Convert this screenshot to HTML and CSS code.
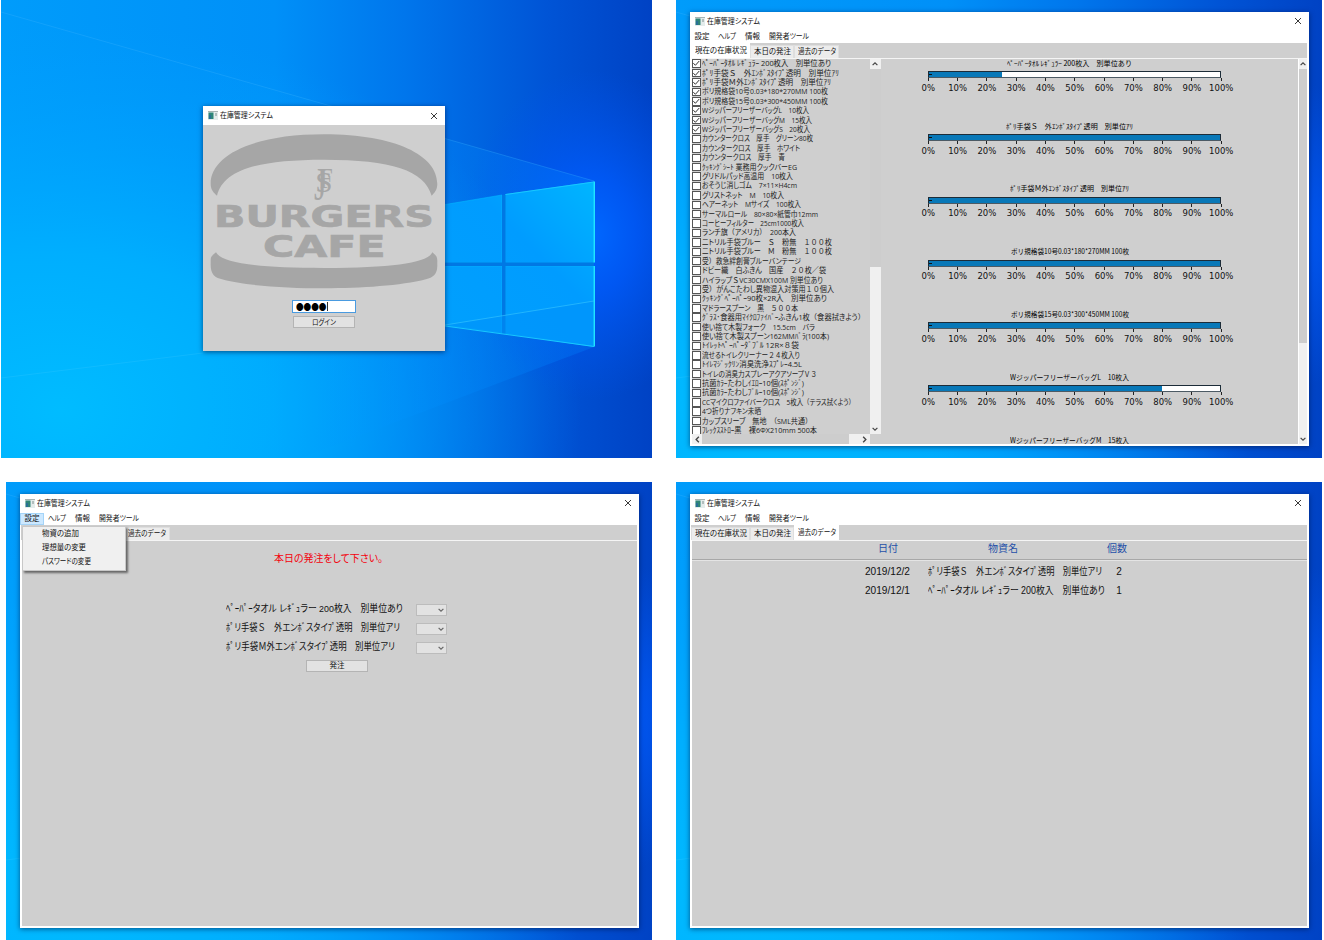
FILE: index.html
```html
<!DOCTYPE html>
<html lang="ja">
<head>
<meta charset="utf-8">
<title>在庫管理システム</title>
<link rel="stylesheet" href="styles.css">
</head>
<body>
<svg class="defs" width="0" height="0" aria-hidden="true">
  <defs>
    <linearGradient id="base" x1="0" y1="0" x2="1" y2="0">
      <stop offset="0" stop-color="#009cfb"/><stop offset=".42" stop-color="#0090f8"/>
      <stop offset=".62" stop-color="#0076ec"/><stop offset=".84" stop-color="#0054d6"/>
      <stop offset="1" stop-color="#0042c4"/>
    </linearGradient>
    <radialGradient id="cyan" gradientUnits="userSpaceOnUse" cx="0" cy="0" r="1" gradientTransform="translate(60 410) scale(520 390)">
      <stop offset="0" stop-color="#00bcff"/><stop offset=".4" stop-color="#00b2ff" stop-opacity=".85"/>
      <stop offset="1" stop-color="#00a0ff" stop-opacity="0"/>
    </radialGradient>
    <radialGradient id="glow" gradientUnits="userSpaceOnUse" cx="0" cy="0" r="1" gradientTransform="translate(590 235) scale(130 165)">
      <stop offset="0" stop-color="#0068ff"/><stop offset=".35" stop-color="#005cff" stop-opacity=".75"/>
      <stop offset="1" stop-color="#0054f0" stop-opacity="0"/>
    </radialGradient>
    <linearGradient id="beam" gradientUnits="userSpaceOnUse" x1="200" y1="0" x2="594" y2="0">
      <stop offset="0" stop-color="#00a8ff" stop-opacity="0"/><stop offset=".55" stop-color="#0092ff" stop-opacity=".5"/>
      <stop offset="1" stop-color="#0080ff" stop-opacity=".7"/>
    </linearGradient>
    <linearGradient id="pane" gradientUnits="userSpaceOnUse" x1="440" y1="340" x2="594" y2="190">
      <stop offset="0" stop-color="#00a0fd"/><stop offset=".6" stop-color="#009cff"/><stop offset="1" stop-color="#00b4ff"/>
    </linearGradient>
    <symbol id="wallpaper" viewBox="0 0 651 458" preserveAspectRatio="none">
      <rect width="651" height="458" fill="url(#base)"/>
      <rect width="651" height="458" fill="url(#cyan)"/>
      <rect width="651" height="458" fill="url(#glow)"/>
      <path d="M0 12 593 181V347L300 458H0Z" fill="url(#beam)" opacity=".45"/>
      <path d="M0 12 593 181" stroke="#3cb4ff" stroke-width="1" opacity=".3"/>
      <path d="M0 378 202 353" stroke="#4cd0ff" stroke-width="1" opacity=".2"/>
      <path d="M400 212 501 195V262.500H400ZM504.500 194.500 593 182V262.500H504.500ZM400 266H501V333L400 319ZM504.500 266H593V346.500L504.500 333.500Z" fill="url(#pane)" stroke="#00b8ff" stroke-width=".6"/>
      <path d="M400 262.500H593V266H400ZM501 195 504.500 194.500V333.500L501 333Z" fill="#0078e4"/>
      <path d="M444 325 593 301V346L444 326Z" fill="#0090fa" opacity=".5"/>
      <path d="M444 325 593 301" stroke="#38c8ff" stroke-width="1" opacity=".6"/>
      <path d="M593.300 181.500V262.500M593.300 266V346.500" stroke="#20e4ff" stroke-width="1.400"/>
      <path d="M504.500 194.500 593 182M444 326 593 346.500" stroke="#18c8ff" stroke-width="1"/>
    </symbol>
    <symbol id="app" viewBox="0 0 10 9">
      <rect width="10" height="9" fill="#e4ecec"/><path d="M0 .5H10" stroke="#aab4b4"/>
      <rect x=".5" y="1.500" width="5" height="6.500" fill="#2f8578"/><rect x="1" y="4" width="2" height="4" fill="#2a6f96"/>
      <path d="M8 2V5" stroke="#647878" stroke-width=".8"/>
    </symbol>
    <symbol id="close" viewBox="0 0 8 8"><path d="M1 1 7 7M7 1 1 7" stroke="#222" stroke-width=".9" fill="none"/></symbol>
    <symbol id="chev" viewBox="0 0 8 8"><path d="M1.600 2.800 4 5.200 6.400 2.800" stroke="currentColor" stroke-width="1.200" fill="none"/></symbol>
  </defs>
</svg>

<main class="screens">
  <section class="desktop first">
    <svg class="wall"><use href="#wallpaper"/></svg>
    <div class="window login">
      <header class="titlebar"><svg class="app"><use href="#app"/></svg><span class="fit" data-w="53">在庫管理システム</span><svg class="close"><use href="#close"/></svg></header>
      <div class="login-body">
        <svg class="logo" viewBox="40 110 700 475">
          <path d="M48 265C48 181 172 117 388 117S728 181 728 265C728 285 719 292 711 301 690 225 590 193 388 193S86 225 67 301C58 292 48 285 48 265Z"/>
          <path d="M64 471C82 502 178 518 388 518S700 502 713 471C722 479 728 482 728 495V512C728 537 714 547 694 552 620 571 500 579 388 579S150 571 82 552C60 546 48 537 48 508V493C48 482 55 479 64 471Z"/>
          <g class="mono"><text x="358" y="314" font-size="142" textLength="38" lengthAdjust="spacingAndGlyphs">J</text><text x="362" y="291" font-size="88" textLength="52" lengthAdjust="spacingAndGlyphs">S</text><text x="376" y="278" font-size="90" textLength="38" lengthAdjust="spacingAndGlyphs">F</text></g>
          <g class="brand"><text x="58" y="396" textLength="660" lengthAdjust="spacingAndGlyphs">BURGERS</text><text x="205" y="486" textLength="368" lengthAdjust="spacingAndGlyphs">CAFE</text></g>
        </svg>
        <div class="password"><span class="fit" data-w="30.5">●●●●</span><i class="caret"></i></div>
        <div class="button"><span class="fit" data-w="24">ログイン</span></div>
      </div>
    </div>
  </section>

  <section class="desktop">
    <svg class="wall"><use href="#wallpaper"/></svg>
    <div class="window main">
      <header class="titlebar"><svg class="app"><use href="#app"/></svg><span class="fit" data-w="53">在庫管理システム</span><svg class="close"><use href="#close"/></svg></header>
      <nav class="menubar"><span class="mi"><span class="fit" data-w="15">設定</span></span><span class="mi"><span class="fit" data-w="18">ヘルプ</span></span><span class="mi"><span class="fit" data-w="15">情報</span></span><span class="mi"><span class="fit" data-w="40">開発者ツール</span></span></nav>
      <div class="tabs"><span class="tab on"><span class="fit" data-w="52">現在の在庫状況</span></span><span class="tab"><span class="fit" data-w="37">本日の発注</span></span><span class="tab"><span class="fit" data-w="38">過去のデータ</span></span></div>
      <div class="page stock">
        <div class="picker">
          <ul class="items" id="items"></ul>
          <div class="vbar"><svg class="up"><use href="#chev"/></svg><i class="thumb"></i><svg class="down"><use href="#chev"/></svg></div>
          <div class="hbar"><svg class="left"><use href="#chev"/></svg><i class="thumb"></i><svg class="right"><use href="#chev"/></svg></div>
        </div>
        <div class="charts" id="charts"></div>
        <div class="vbar outer"><svg class="up"><use href="#chev"/></svg><i class="thumb"></i><svg class="down"><use href="#chev"/></svg></div>
      </div>
    </div>
  </section>

  <section class="desktop third">
    <svg class="wall"><use href="#wallpaper"/></svg>
    <div class="window main">
      <header class="titlebar"><svg class="app"><use href="#app"/></svg><span class="fit" data-w="53">在庫管理システム</span><svg class="close"><use href="#close"/></svg></header>
      <nav class="menubar"><span class="mi open"><span class="fit" data-w="15">設定</span></span><span class="mi"><span class="fit" data-w="18">ヘルプ</span></span><span class="mi"><span class="fit" data-w="15">情報</span></span><span class="mi"><span class="fit" data-w="40">開発者ツール</span></span></nav>
      <div class="tabs"><span class="tab last"><span class="fit" data-w="38">過去のデータ</span></span></div>
      <div class="page order">
        <p class="notice"><span class="fit" data-w="109">本日の発注をして下さい。</span></p>
        <div class="line"><span class="name"><span class="fit" data-w="177">ﾍﾟｰﾊﾟｰタオル レｷﾞｭラー 200枚入　別単位あり</span></span><span class="combo"><svg><use href="#chev"/></svg></span></div>
        <div class="line"><span class="name"><span class="fit" data-w="174">ﾎﾟリ手袋Ｓ　外エンﾎﾞスタイﾌﾟ透明　別単位アリ</span></span><span class="combo"><svg><use href="#chev"/></svg></span></div>
        <div class="line"><span class="name"><span class="fit" data-w="169">ﾎﾟリ手袋Ｍ外エンﾎﾞスタイﾌﾟ透明　別単位アリ</span></span><span class="combo"><svg><use href="#chev"/></svg></span></div>
        <div class="button"><span class="fit" data-w="15">発注</span></div>
      </div>
      <div class="dropdown"><span class="fit" data-w="37">物資の追加</span><span class="fit" data-w="44">理想量の変更</span><span class="fit" data-w="49">パスワードの変更</span></div>
    </div>
  </section>

  <section class="desktop">
    <svg class="wall"><use href="#wallpaper"/></svg>
    <div class="window main">
      <header class="titlebar"><svg class="app"><use href="#app"/></svg><span class="fit" data-w="53">在庫管理システム</span><svg class="close"><use href="#close"/></svg></header>
      <nav class="menubar"><span class="mi"><span class="fit" data-w="15">設定</span></span><span class="mi"><span class="fit" data-w="18">ヘルプ</span></span><span class="mi"><span class="fit" data-w="15">情報</span></span><span class="mi"><span class="fit" data-w="40">開発者ツール</span></span></nav>
      <div class="tabs"><span class="tab"><span class="fit" data-w="52">現在の在庫状況</span></span><span class="tab"><span class="fit" data-w="37">本日の発注</span></span><span class="tab on"><span class="fit" data-w="38">過去のデータ</span></span></div>
      <div class="page history">
        <div class="row head"><span><span class="fit" data-w="20">日付</span></span><span><span class="fit" data-w="30">物資名</span></span><span><span class="fit" data-w="20">個数</span></span></div>
        <div class="row"><span><span class="fit" data-w="45">2019/12/2</span></span><span><span class="fit" data-w="174">ﾎﾟリ手袋Ｓ　外エンﾎﾞスタイﾌﾟ透明　別単位アリ</span></span><span>2</span></div>
        <div class="row"><span><span class="fit" data-w="45">2019/12/1</span></span><span><span class="fit" data-w="177">ﾍﾟｰﾊﾟｰタオル レｷﾞｭラー 200枚入　別単位あり</span></span><span>1</span></div>
      </div>
    </div>
  </section>
</main>
<script src="app.js"></script>
</body>
</html>
```

FILE: styles.css
```css
* { box-sizing: border-box; }
body { margin: 0; width: 1324px; height: 940px; overflow: hidden; background: #fff; color: #111;
  font-family: "Open Sans", "Noto Sans CJK JP", sans-serif; font-size: 7.5px; line-height: 1; }
.defs { position: absolute; }
.screens { display: grid; grid-template-columns: 646px 646px; grid-template-rows: 458px 458px; column-gap: 24px; row-gap: 24px; padding-left: 6px; }
.desktop { position: relative; overflow: hidden; }
.first { margin-left: -5px; }
.wall { display: block; width: 100%; height: 100%; }
.window { position: absolute; display: flex; flex-direction: column; background: #cfcfcf; box-shadow: 0 1px 5px rgba(0,15,60,.6); }
.login { left: 202px; top: 106px; width: 242px; height: 245px; }
.main { left: 14px; top: 12px; width: 619px; height: 434px; background: #fff; padding: 0 2px 2px; }

.fit { display: block; white-space: pre; flex: none; font-feature-settings: "palt"; }
.fit > span { display: inline-block; transform-origin: 0 50%; }
.wide { font-feature-settings: normal; }

.titlebar { height: 18px; flex: none; display: flex; align-items: center; background: #fff; padding: 1px 0 0 3px; gap: 2px; }
.login .titlebar { height: 19px; padding: 0 0 0 5px; }
.app { width: 10px; height: 9px; }
.main .app { margin-top: -1px; }
.close { width: 8px; height: 8px; margin-left: auto; margin-right: 5px; }
.main .close { margin-top: -1px; }
.login .close { margin-right: 7px; }
.menubar { height: 13px; flex: none; display: flex; align-items: center; margin-left: -2px; }
.mi { padding: 1px 4.400px 0; height: 12px; display: flex; align-items: center; }
.mi.open { background: #cce8ff; box-shadow: inset 0 0 0 1px #a4d4f8; }
.tabs { height: 15px; flex: none; display: flex; align-items: flex-end; background: #cfcfcf; margin-left: -1px; }
.tab { height: 13px; display: flex; align-items: center; padding: 0 2.500px; background: #ececec; border: 1px solid #dedede; border-bottom: 0; }
.tab.on { height: 15px; background: #fff; border-color: #fff; }
.tab.last { margin-left: 103.500px; }
.page { flex: 1; min-height: 0; background: #cfcfcf; border-top: 1px solid #f5f5f5; }

.login-body { display: flex; flex-direction: column; align-items: center; }
.logo { width: 233.300px; height: 158.300px; margin-top: 6.700px; margin-left: 1px; fill: #a6a6a6; }
.brand { font-family: "DejaVu Sans", sans-serif; font-weight: 700; font-size: 91px; stroke: #a6a6a6; stroke-width: 2px; }
.mono { font-family: "Liberation Serif", serif; }
.password { margin-top: 10px; width: 64px; height: 13px; background: #fff; border: 1px solid #4a9be0; display: flex; align-items: center; padding-left: 3px; font-family: "Noto Sans CJK JP", sans-serif; font-size: 9px; color: #000; }
.caret { width: 1px; height: 9px; background: #333; }
.button { width: 62px; height: 11.500px; border: 1px solid #b4b4b4; background: #e2e2e2; display: flex; align-items: center; justify-content: center; }
.login .button { margin-top: 3.500px; padding-top: 1px; }

.stock { display: grid; grid-template-columns: 189px 1fr 9px; }
.picker { display: grid; grid-template-columns: 178px 10.500px; grid-template-rows: 375px 10px; min-height: 0; height: 385px; }
.items { list-style: none; margin: 0; padding: 0; overflow: hidden; color: #222; }
.items li { height: 9.420px; display: flex; align-items: center; gap: 1.500px; font-size: 7.600px; }
.items .fit { padding-top: .5px; }
.box { flex: none; width: 8.500px; height: 8.500px; background: #fff; border: 1px solid #555; }
.box svg { display: block; width: 6.500px; height: 6.500px; }
.vbar { background: #f0f0f0; display: flex; flex-direction: column; align-items: center; color: #444; }
.vbar svg { width: 8px; height: 10px; flex: none; }
.up { transform: rotate(180deg); }
.thumb { background: #cdcdcd; }
.vbar .thumb { width: 100%; height: 198px; }
.vbar .down { margin-top: auto; }
.outer { border-left: 1px solid #fff; height: 385px; }
.outer .thumb { height: 274px; }
.hbar { background: #f0f0f0; display: flex; align-items: center; color: #444; padding: 0 1px; }
.hbar svg { width: 9px; height: 9px; flex: none; }
.hbar .thumb { height: 100%; width: 147px; }
.left { transform: rotate(90deg); }
.right { transform: rotate(-90deg); margin-left: auto; }

.charts { overflow: hidden; height: 385px; padding-left: 47.300px; }
.chart { height: 62.800px; width: 293px; }
.chart:last-child { height: 8px; }
.chart h4 { margin: 0 0 0 -10px; height: 12.300px; padding-bottom: 3.500px; display: flex; justify-content: center; align-items: center; font: 400 7.200px/1 "Noto Sans CJK JP", sans-serif; color: #000; }
.chart .fit { font-feature-settings: normal; }
.bar { height: 7px; border: 1px solid #1c2c38; background: #fff; position: relative; border-bottom-color: #4c5a64; }
.fill { height: 100%; background: #0878b8; }
.bar::after { content: ""; position: absolute; left: 0; top: 2px; width: 3px; height: 1px; background: #111; }
.axis { display: flex; justify-content: space-between; margin: 0 -14.600px; }
.axis span { width: 29.200px; display: flex; flex-direction: column; align-items: center; font: 8.500px/10px "DejaVu Sans", sans-serif; color: #111; }
.axis span::before { content: ""; width: 1px; height: 3px; background: #222; margin-bottom: 1.500px; }

.order { display: flex; flex-direction: column; padding-left: 204px; font-size: 9.800px; font-family: "Liberation Sans", "Noto Sans CJK JP", sans-serif; }
.notice { margin: 10px 0 34.500px 48px; color: #f4000c; height: 14px; display: flex; align-items: center; font-size: 10.500px; }
.line { display: flex; align-items: center; height: 19px; }
.name { width: 189.500px; }
.combo { width: 31.500px; height: 12.500px; border: 1px solid #bcbcbc; background: #e2e2e2; display: flex; justify-content: flex-end; align-items: center; color: #666; margin-top: 2px; }
.combo svg { width: 8px; height: 8px; margin-right: 1px; }
.order .button { margin: 3.500px 0 0 80px; font-size: 7.500px; }
.dropdown { position: absolute; left: 2px; top: 32px; width: 104px; height: 45px; background: #f0f0f0; border: 1px solid #c8c8c8; box-shadow: 2px 2px 2px rgba(0,0,0,.5); padding: 0 0 0 19px; display: grid; grid-template-rows: repeat(3, 13.800px); align-items: center; }

.history { font-size: 10px; font-family: "Liberation Sans", "Noto Sans CJK JP", sans-serif; }
.row { display: grid; grid-template-columns: 45px 199px 20px; padding-left: 173px; height: 18.700px; align-items: center; }
.row > span:nth-child(2) { padding-left: 18px; }
.row > span:nth-child(3) { display: flex; justify-content: center; }
.head { grid-template-columns: 45px 197px 20px; color: #2450a8; height: 19px; border-bottom: 1px solid #a8a8a8; box-shadow: 0 1px #e4e4e4; padding-bottom: 3px; margin-bottom: 3px; }
.head > span:first-child { padding-left: 13px; }
.head > span:nth-child(2) { padding-left: 78px; }
```

FILE: app.js
```js
// [label, checked, text width in px]
const items = [
  ["ﾍﾟｰﾊﾟｰﾀｵﾙ ﾚｷﾞｭﾗｰ 200枚入　別単位あり", 1, 129],
  ["ﾎﾟﾘ手袋Ｓ　外ｴﾝﾎﾞｽﾀｲﾌﾟ透明　別単位ｱﾘ", 1, 137],
  ["ﾎﾟﾘ手袋Ｍ外ｴﾝﾎﾞｽﾀｲﾌﾟ透明　別単位ｱﾘ", 1, 129],
  ["ポリ規格袋10号0.03*180*270MM 100枚", 1, 126],
  ["ポリ規格袋15号0.03*300*450MM 100枚", 1, 126],
  ["WジッパーフリーザーバッグL　10枚入", 1, 107],
  ["WジッパーフリーザーバッグM　15枚入", 1, 110],
  ["WジッパーフリーザーバッグS　20枚入", 1, 108],
  ["カウンタークロス　厚手　グリーン80枚", 0, 111],
  ["カウンタークロス　厚手　ホワイト", 0, 98],
  ["カウンタークロス　厚手　青", 0, 83],
  ["ｸｯｷﾝｸﾞｼｰﾄ 業務用クックバーEG", 0, 95],
  ["グリドルパッド高温用　10枚入", 0, 91],
  ["おそうじ消しゴム　7×11×H4cm", 0, 95],
  ["グリストネット　M　10枚入", 0, 82],
  ["ヘアーネット　Mサイズ　100枚入", 0, 99],
  ["サーマルロール　80×80×紙管巾12mm", 0, 116],
  ["コーヒーフィルター　25cm1000枚入", 0, 102],
  ["ランチ旗（アメリカ）　200本入", 0, 94],
  ["ニトリル手袋ブルー　Ｓ　粉無　１００枚", 0, 130],
  ["ニトリル手袋ブルー　Ｍ　粉無　１００枚", 0, 130],
  ["受）救急絆創膏ブルーバンテージ", 0, 99],
  ["ドビー織　白ふきん　国産　２０枚／袋", 0, 124],
  ["ハイラップＳVC30CMX100M 別単位あり", 0, 121],
  ["受）がんこたわし異物混入対策用１０個入", 0, 132],
  ["ｸｯｷﾝｸﾞﾍﾟｰﾊﾟｰ90枚×2R入　別単位あり", 0, 125],
  ["マドラースプーン　黒　５００本", 0, 96],
  ["ｸﾞﾗｽ･食器用ﾏｲｸﾛﾌｧｲﾊﾞｰふきん1枚（食器拭きよう）", 0, 163],
  ["使い捨て木製フォーク　15.5cm　バラ", 0, 113],
  ["使い捨て木製スプーン162MMﾊﾞﾗ(100本)", 0, 127],
  ["ﾄｲﾚｯﾄﾍﾟｰﾊﾟｰﾀﾞﾌﾞﾙ 12R×８袋", 0, 97],
  ["流せるトイレクリーナー２４枚入り", 0, 98],
  ["ﾄｲﾚﾏｼﾞｯｸﾘﾝ消臭洗浄ｽﾌﾟﾚｰ4.5L", 0, 100],
  ["トイレの消臭力スプレーアクアソープＶ３", 0, 115],
  ["抗菌ｶﾗｰたわしｲｴﾛｰ10個(ｽﾎﾟﾝｼﾞ)", 0, 102],
  ["抗菌ｶﾗｰたわしﾌﾞﾙｰ10個(ｽﾎﾟﾝｼﾞ)", 0, 102],
  ["CCマイクロファイバークロス　5枚入（テラス拭くよう）", 0, 153],
  ["4つ折りナフキン未晒", 0, 59],
  ["カップスリーブ　無地　（SML共通）", 0, 110],
  ["ﾌﾚｯｸｽｽﾄﾛｰ黒　裸6ΦX210mm 500本", 0, 115]
];
// [title, percent, title width in px]; the last one only shows its title above the fold
const charts = [
  ["ﾍﾟｰﾊﾟｰﾀｵﾙ ﾚｷﾞｭﾗｰ 200枚入　別単位あり", 25, 125],
  ["ﾎﾟﾘ手袋Ｓ　外ｴﾝﾎﾞｽﾀｲﾌﾟ透明　別単位ｱﾘ", 100, 127],
  ["ﾎﾟﾘ手袋Ｍ外ｴﾝﾎﾞｽﾀｲﾌﾟ透明　別単位ｱﾘ", 100, 119],
  ["ポリ規格袋10号0.03*180*270MM 100枚", 100, 118],
  ["ポリ規格袋15号0.03*300*450MM 100枚", 100, 118],
  ["WジッパーフリーザーバッグL　10枚入", 80, 119],
  ["WジッパーフリーザーバッグM　15枚入", null, 119]
];
const tick = '<svg viewBox="0 0 7 7"><path d="M.4 3.400 2.600 5.700 6.700 1.100" fill="none" stroke="#222" stroke-width="1"/></svg>';
document.getElementById("items").innerHTML = items.map(([t, on, w]) =>
  `<li><i class="box">${on ? tick : ""}</i><span class="fit" data-w="${w}">${t}</span></li>`).join("");
const labels = Array.from({ length: 11 }, (_, i) => `<span>${i * 10}%</span>`).join("");
const gauge = p => p === null ? "" :
  `<div class="bar"><div class="fill" style="width:${p}%"></div></div><div class="axis">${labels}</div>`;
document.getElementById("charts").innerHTML = charts.map(([t, p, w]) =>
  `<div class="chart"><h4><span class="fit" data-w="${w}">${t}</span></h4>${gauge(p)}</div>`).join("");

document.querySelectorAll(".fit").forEach(el => {
  const html = el.textContent.replace(/[Ａ-Ｚ０-９（）／]+/g, m => `<span class="wide">${m}</span>`);
  el.innerHTML = `<span>${html}</span>`;
  const inner = el.firstChild, target = +el.dataset.w;
  const natural = inner.getBoundingClientRect().width;
  el.style.width = target + "px";
  inner.style.transform = `scaleX(${target / natural})`;
});
```
